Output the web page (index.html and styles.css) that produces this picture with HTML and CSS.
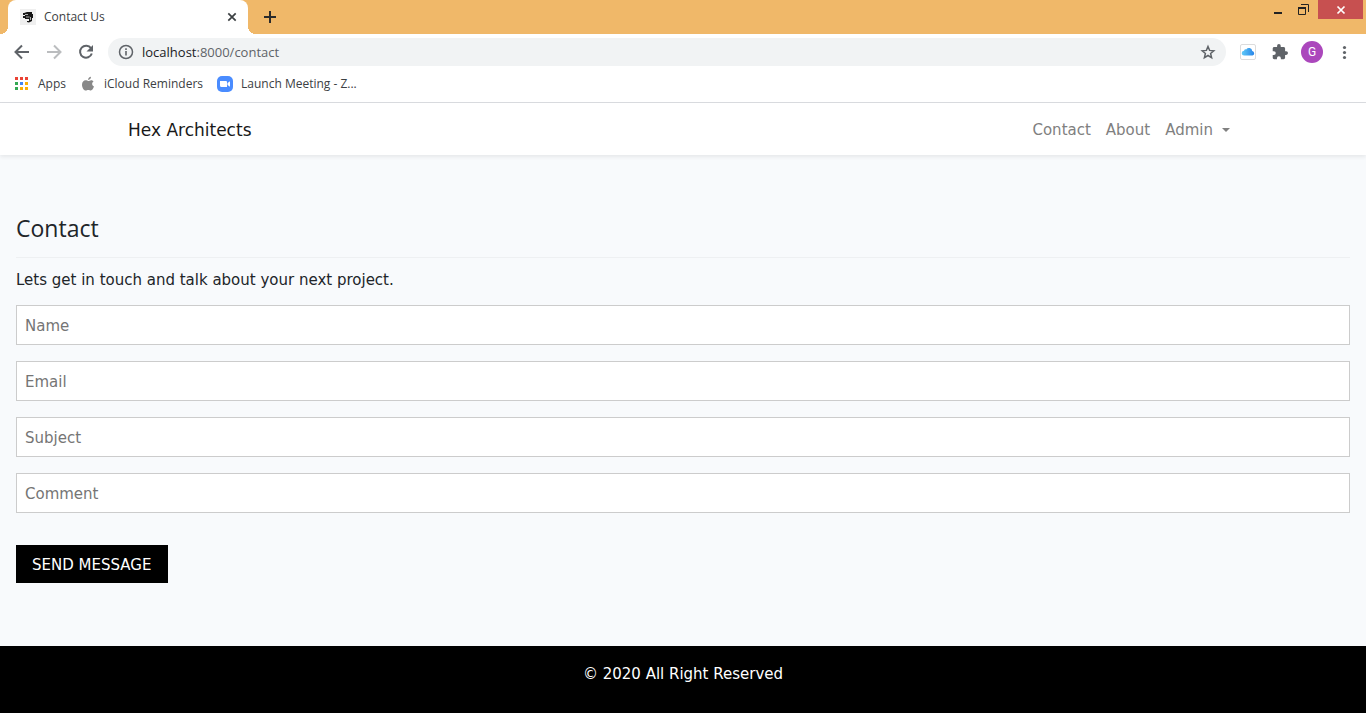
FILE: index.html
```html
<!DOCTYPE html>
<html lang="en">
<head>
<meta charset="utf-8">
<title>Contact Us</title>
<link rel="stylesheet" href="styles.css">
</head>
<body>
<header class="browser">
  <div class="tabstrip">
    <div class="tab">
      <svg class="favicon" width="16" height="16" viewBox="0 0 16 16"><path fill="#efefef" d="M0 0h16v16H0z"/><path d="M4 4l3-1h5v2h1v4h-1v3l-3 1.500L7 13v-1h2v-2H5V9H3V7h2V6H3V4z" fill="#151515"/><path d="M5 5.500h3M6 8h3.500M10.500 8v3" fill="none" stroke="#aaa"/></svg>
      <span class="tab-title">Contact Us</span>
      <button class="icon-btn" aria-label="Close tab"><svg width="10" height="10" viewBox="0 0 10 10"><path d="M1.300 1.300l7.400 7.400M8.700 1.300l-7.400 7.400" stroke="#3c4043" stroke-width="1.700"/></svg></button>
    </div>
    <button class="icon-btn new-tab" aria-label="New tab"><svg width="12" height="12" viewBox="0 0 12 12"><path d="M6 0v12M0 6h12" stroke="#2b2b2b" stroke-width="2"/></svg></button>
    <div class="window-controls">
      <button class="win-btn" aria-label="Minimize"><svg width="12" height="12" viewBox="0 0 12 12"><path d="M2 8h8v2H2z" fill="#222"/></svg></button>
      <button class="win-btn" aria-label="Restore"><svg width="12" height="12" viewBox="0 0 12 12"><path d="M3 .5h7.500V8M.5 3.500h7v7h-7z" fill="none" stroke="#222"/><path d="M0 3h8v2H0z" fill="#222"/></svg></button>
      <button class="win-btn close" aria-label="Close window"><svg width="10" height="10" viewBox="0 0 10 10"><path d="M1.500 1.500l7 7M8.500 1.500l-7 7" stroke="#fff" stroke-width="1.700"/></svg></button>
    </div>
  </div>
  <div class="toolbar">
    <button class="icon-btn" aria-label="Back"><svg width="16" height="16" viewBox="0 0 16 16"><path d="M15 8H2M8 1.500L1.500 8 8 14.500" fill="none" stroke="#5f6368" stroke-width="2"/></svg></button>
    <button class="icon-btn" aria-label="Forward"><svg width="16" height="16" viewBox="0 0 16 16"><path d="M1 8h13M8 1.500L14.500 8 8 14.500" fill="none" stroke="#bbbdbf" stroke-width="2"/></svg></button>
    <button class="icon-btn" aria-label="Reload"><svg width="16" height="16" viewBox="0 0 16 16"><path d="M13 4.200A6 6 0 1 0 13.800 9.500" fill="none" stroke="#5f6368" stroke-width="2"/><path d="M15 1v6.500H8.500z" fill="#5f6368"/></svg></button>
    <div class="omnibox">
      <svg width="16" height="16" viewBox="0 0 16 16"><circle cx="8" cy="8" r="6.500" fill="none" stroke="#5f6368" stroke-width="1.500"/><path d="M7.200 7h1.600v4.500H7.200zM7.200 4.300h1.600v1.600H7.200z" fill="#5f6368"/></svg>
      <span class="url">localhost<span class="path">:8000/contact</span></span>
      <button class="icon-btn" aria-label="Bookmark this page"><svg width="16" height="16" viewBox="0 0 16 16"><path d="M8 2.500l1.600 3.900 4.200.4-3.200 2.700 1 4.200L8 11.500l-3.600 2.200 1-4.200-3.200-2.700 4.200-.4z" fill="none" stroke="#5f6368" stroke-width="1.500"/></svg></button>
    </div>
    <div class="extensions">
      <button class="icon-btn" aria-label="iCloud"><svg width="16" height="16" viewBox="0 0 16 16"><defs><linearGradient id="cloud"><stop stop-color="#5fcaf8"/><stop offset="1" stop-color="#2884e8"/></linearGradient></defs><rect x=".5" y=".5" width="15" height="15" rx="1.500" fill="#fff" stroke="#dcdcdc"/><path d="M4.200 11.500a2.400 2.400 0 0 1-.2-4.800 2 2 0 0 1 2.200-1.300 3.300 3.300 0 0 1 6 1.600 2.300 2.300 0 0 1 .3 4.500z" fill="url(#cloud)"/></svg></button>
      <button class="icon-btn" aria-label="Extensions"><svg width="16" height="16" viewBox="1 1 22 22"><path d="M20.500 11H19V7c0-1.100-.9-2-2-2h-4V3.500a2.500 2.500 0 0 0-5 0V5H4c-1.100 0-2 .9-2 2v3.800h1.500a2.700 2.700 0 0 1 0 5.400H2V20c0 1.100.9 2 2 2h3.800v-1.500a2.700 2.700 0 0 1 5.400 0V22H17c1.100 0 2-.9 2-2v-4h1.500a2.500 2.500 0 0 0 0-5z" fill="#5f6368"/></svg></button>
      <button class="avatar">G</button>
      <button class="icon-btn" aria-label="Menu"><svg width="16" height="16" viewBox="0 0 16 16"><g fill="#5f6368"><circle cx="8.500" cy="3.500" r="1.600"/><circle cx="8.500" cy="8.500" r="1.600"/><circle cx="8.500" cy="13.500" r="1.600"/></g></svg></button>
    </div>
  </div>
  <nav class="bookmarks" aria-label="Bookmarks">
    <a href="#"><svg width="16" height="16" viewBox="0 0 16 16"><path fill="#ea4335" d="M1 1h3v3H1zM6 1h3v3H6zM11 1h3v3h-3z"/><path fill="#34a853" d="M1 6h3v3H1zM1 11h3v3H1z"/><path fill="#4285f4" d="M6 6h3v3H6z"/><path fill="#fbaf05" d="M11 6h3v3h-3zM6 11h3v3H6zM11 11h3v3h-3z"/></svg>Apps</a>
    <a href="#"><svg width="16" height="16" viewBox="0 0 16 16"><path fill="#888" d="M11 .8c.1 1.700-1.300 3.200-2.900 3.100C8 2.400 9.400 1 11 .8zM13.500 5.600c-2 1.300-1.700 4 .5 5-.6 1.700-1.800 4-3.200 4-1 0-1.300-.6-2.500-.6s-1.600.6-2.500.6C3.700 14.500 2 11.500 2 8.800c0-3 1.800-4.500 3.600-4.500 1.100 0 2 .7 2.700.7.700 0 1.700-.8 3-.8 1 0 1.800.6 2.200 1.400z"/></svg>iCloud Reminders</a>
    <a href="#"><svg width="16" height="16" viewBox="0 0 16 16"><rect width="16" height="16" rx="5" fill="#4a8cff"/><path fill="#fff" d="M3 5h6q1 0 1 1v5H4.500Q3 11 3 9.500zM10.500 7L13 5.300v5.400L10.500 9z"/></svg>Launch Meeting - Z...</a>
  </nav>
</header>
<nav class="navbar">
  <div class="container">
    <a class="brand" href="#">Hex Architects</a>
    <div class="links">
      <a href="#">Contact</a>
      <a href="#">About</a>
      <a class="dropdown" href="#">Admin</a>
    </div>
  </div>
</nav>
<main class="content">
  <h1>Contact</h1>
  <p>Lets get in touch and talk about your next project.</p>
  <form>
    <input type="text" placeholder="Name" aria-label="Name">
    <input type="email" placeholder="Email" aria-label="Email">
    <input type="text" placeholder="Subject" aria-label="Subject">
    <input type="text" placeholder="Comment" aria-label="Comment">
    <button class="send" type="submit">SEND MESSAGE</button>
  </form>
</main>
<footer class="footer">© 2020 All Right Reserved</footer>
</body>
</html>
```
FILE: styles.css
```css
* { box-sizing: border-box; }
body {
  margin: 0;
  min-height: 100vh;
  display: flex;
  flex-direction: column;
  background: #f8fafc;
  color: #212529;
  font: 15px/24px "DejaVu Sans", sans-serif;
}
button { border: 0; padding: 0; background: none; font: inherit; }
a { color: inherit; text-decoration: none; }
svg { display: block; flex: none; }

.browser {
  background: #fff;
  border-bottom: 1px solid #dadce0;
  font: 12px/16px "Open Sans", sans-serif;
  color: #3c4043;
}
.icon-btn { display: flex; align-items: center; justify-content: center; }
.tabstrip { display: flex; height: 34px; padding-left: 8px; background: #f0b869; }
.tab {
  position: relative;
  display: flex;
  align-items: center;
  gap: 8px;
  width: 240px;
  padding: 0 11px 0 12px;
  background: #fff;
  border-radius: 8px 8px 0 0;
}
.tab::before, .tab::after {
  content: "";
  position: absolute;
  bottom: 0;
  width: 8px;
  height: 8px;
}
.tab::before { right: 100%; background: radial-gradient(circle at 0 0, transparent 8px, #fff 8px); }
.tab::after { left: 100%; background: radial-gradient(circle at 100% 0, transparent 8px, #fff 8px); }
.tab-title { flex: 1; }
.new-tab { width: 44px; }
.window-controls { display: flex; margin-left: auto; padding-right: 3px; }
.win-btn { display: flex; align-items: center; justify-content: center; width: 26px; height: 19px; }
.win-btn.close { width: 45px; margin-left: 1px; background: #c75050; }

.toolbar { display: flex; align-items: center; gap: 16px; height: 36px; padding: 0 14px; }
.omnibox {
  flex: 1;
  display: flex;
  align-items: center;
  gap: 8px;
  height: 28px;
  padding: 0 10px;
  margin: 0 -2px;
  border-radius: 14px;
  background: #f1f3f4;
  font-size: 13px;
}
.url { flex: 1; color: #202124; }
.path { color: #5f6368; }
.extensions { display: flex; align-items: center; gap: 16px; }
.avatar {
  width: 22px;
  height: 22px;
  margin: 0 -3px;
  border-radius: 50%;
  background: #ab47bc;
  color: #fff;
  font: 12px/22px Roboto, sans-serif;
}
.bookmarks { display: flex; gap: 14px; height: 32px; padding: 0 14px 4px; }
.bookmarks a { display: flex; align-items: center; gap: 8px; }

.navbar { background: #fff; box-shadow: 0 2px 4px rgba(0, 0, 0, .075); }
.container {
  display: flex;
  align-items: center;
  justify-content: space-between;
  max-width: 1140px;
  padding: 15px 23px 13px 15px;
  margin: 0 auto;
}
.brand { font-size: 17px; color: #191919; }
.links { display: flex; gap: 15px; color: #808080; }
.dropdown { display: flex; align-items: center; gap: 9px; }
.dropdown::after { content: ""; border: 4px solid transparent; border-top-color: currentColor; border-bottom: 0; }

.content { flex: 1; padding: 55px 16px 63px; }
h1 {
  margin: 0 0 10px;
  padding-bottom: 11px;
  border-bottom: 1px solid #eef0f2;
  font: 23px/36px "Open Sans", sans-serif;
}
p { margin: 0 0 13px; }
form { display: flex; flex-direction: column; gap: 16px; align-items: flex-start; }
input {
  width: 100%;
  height: 40px;
  padding: 9px 8px 7px;
  border: 1px solid #ccc;
  border-radius: 0;
  background: #fff;
  font: inherit;
}
input::placeholder { color: #757575; opacity: 1; }
.send { margin-top: 16px; padding: 9px 17px 7px 16px; line-height: 22px; background: #000; color: #fff; }
.footer { padding: 16px 16px 27px; background: #000; color: #fff; text-align: center; }
```
